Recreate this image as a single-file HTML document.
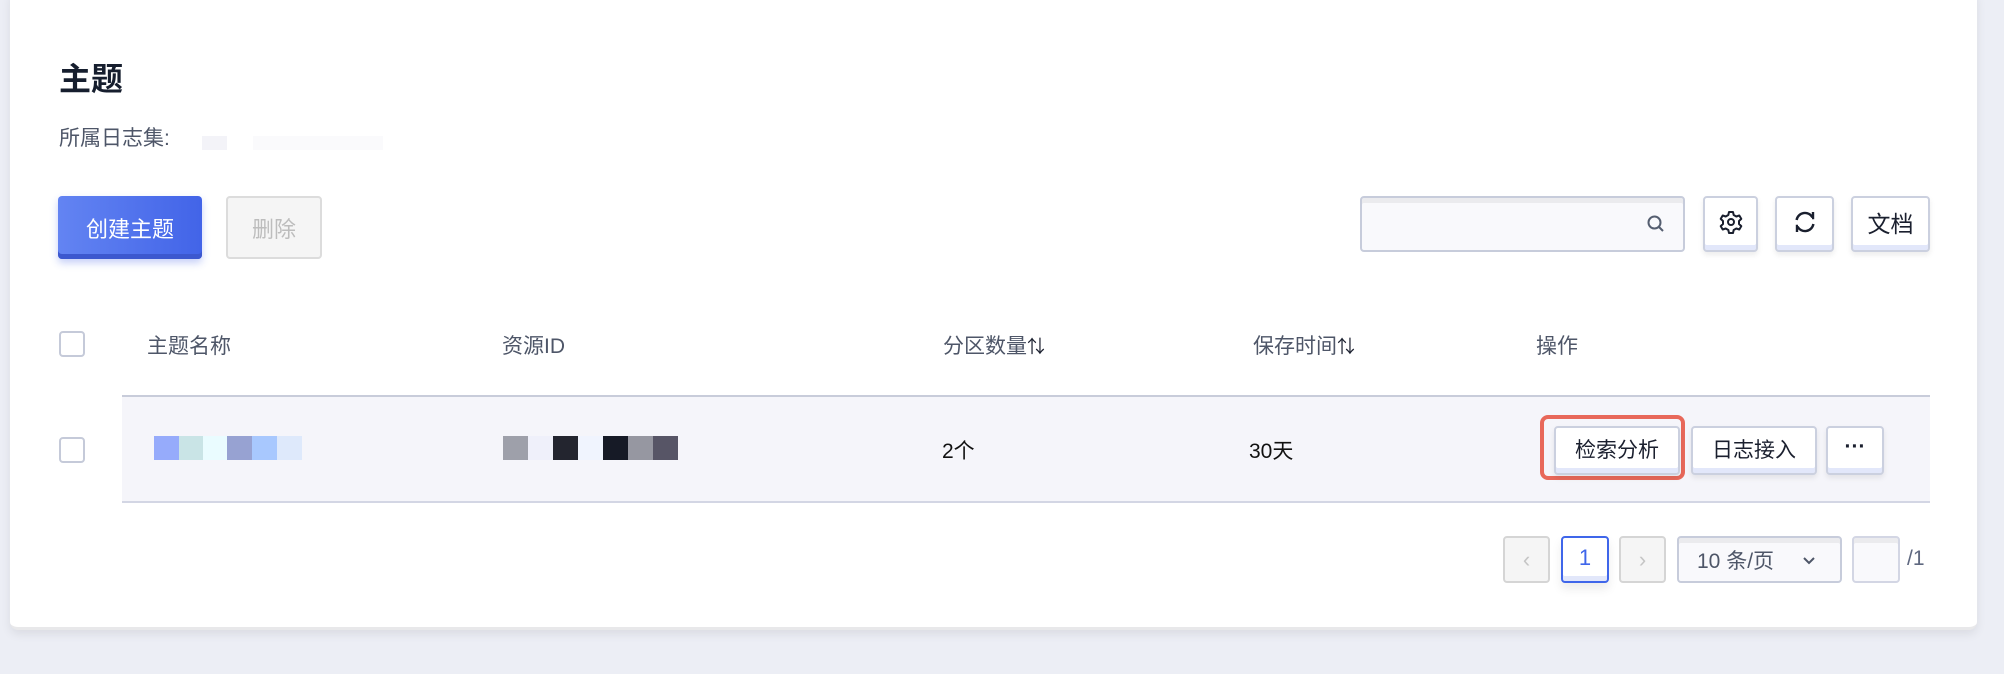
<!DOCTYPE html>
<html><head><meta charset="utf-8"><style>
*{box-sizing:border-box;margin:0;padding:0}
body{width:2004px;height:674px;background:#eceef5;font-family:"Liberation Sans","Noto Sans CJK SC",sans-serif;position:relative;overflow:hidden}
.card{position:absolute;left:10px;top:-10px;width:1967px;height:640px;background:#fff;border-radius:8px;box-shadow:0 4px 10px rgba(0,0,0,.08);border-bottom:3px solid #e8e8ea}
.a{position:absolute}
.btn{position:absolute;background:#fff;border:2px solid #cbd0df;border-radius:4px;box-shadow:inset 0 -5px 0 #e2e7fa,0 3px 6px rgba(0,0,0,.08);display:flex;align-items:center;justify-content:center;color:#1a1f2e;font-size:21px}
.th{position:absolute;top:330px;font-size:21px;color:#4e5668}
.cb{position:absolute;width:26px;height:26px;border:2px solid #c5cad9;border-radius:4px;background:#fff}
.blk{position:absolute;top:436px;height:24px;width:25px}
.pg{position:absolute;top:536px;height:47px;border-radius:4px;display:flex;align-items:center;justify-content:center}
</style></head><body>
<div class="card"></div>
<div class="a" style="left:59px;top:54px;font-size:32px;font-weight:bold;color:#161e2e">主题</div>
<div class="a" style="left:59px;top:122px;font-size:21px;color:#4e5668">所属日志集:</div>
<div class="a" style="left:202px;top:136px;width:25px;height:14px;background:#f3f3f8"></div>
<div class="a" style="left:253px;top:136px;width:130px;height:14px;background:#fafafc"></div>

<div class="a" style="left:58px;top:196px;width:144px;height:63px;border-radius:4px;background:linear-gradient(90deg,#6384f2,#4264e8);box-shadow:inset 0 -5px 0 #3c58cf,0 4px 8px rgba(66,100,232,.3);color:#fff;font-size:22px;display:flex;align-items:center;justify-content:center">创建主题</div>
<div class="a" style="left:226px;top:196px;width:96px;height:63px;border-radius:4px;background:#f5f5f5;border:2px solid #dcdcdc;color:#bdbdbd;font-size:22px;display:flex;align-items:center;justify-content:center">删除</div>

<div class="a" style="left:1360px;top:196px;width:325px;height:56px;border:2px solid #c7ccdb;border-radius:4px;background:#f9f9fc;box-shadow:inset 0 5px 0 #ebebee"></div>
<svg class="a" style="left:1646px;top:214px" width="20" height="20" viewBox="0 0 20 20"><circle cx="8.5" cy="8.5" r="6" fill="none" stroke="#555e70" stroke-width="2"/><path d="M13 13l4 4" stroke="#555e70" stroke-width="2"/></svg>
<div class="btn" style="left:1703px;top:196px;width:55px;height:56px"><svg width="24" height="24" viewBox="0 0 24 24" style="margin-top:-4px"><path d="M10 2h4l.7 3 2.6 1.5 3-1 2 3.4-2.3 2.1v3l2.3 2.1-2 3.4-3-1-2.6 1.5-.7 3h-4l-.7-3-2.6-1.5-3 1-2-3.4 2.3-2.1v-3L1.7 8.9l2-3.4 3 1L9.3 5z" fill="none" stroke="#1a1f2e" stroke-width="2" stroke-linejoin="round"/><circle cx="12" cy="12" r="3" fill="none" stroke="#1a1f2e" stroke-width="2"/></svg></div>
<div class="btn" style="left:1775px;top:196px;width:59px;height:56px"><svg width="26" height="26" viewBox="0 0 26 26" style="margin-top:-4px"><path d="M20.5 8.5A8.5 8.5 0 0 0 4.6 11M5.5 17.5a8.5 8.5 0 0 0 15.9-2.5" fill="none" stroke="#1a1f2e" stroke-width="2.4"/><path d="M21 3v6h-1" fill="none" stroke="#1a1f2e" stroke-width="2.4"/><path d="M5 23v-6h1" fill="none" stroke="#1a1f2e" stroke-width="2.4"/></svg></div>
<div class="btn" style="left:1851px;top:196px;width:79px;height:56px;font-size:23px;padding-bottom:4px">文档</div>

<div class="cb" style="left:59px;top:331px"></div>
<div class="th" style="left:147px">主题名称</div>
<div class="th" style="left:502px">资源ID</div>
<div class="th" style="left:943px">分区数量<span style="font-size:18px;color:#1a1f2e">⇅</span></div>
<div class="th" style="left:1253px">保存时间<span style="font-size:18px;color:#1a1f2e">⇅</span></div>
<div class="th" style="left:1536px">操作</div>
<div class="a" style="left:122px;top:395px;width:1808px;height:108px;background:#f5f5fa;border-top:2px solid #c8ccda;border-bottom:2px solid #d3d6e4"></div>
<div class="cb" style="left:59px;top:437px"></div>
<div class="blk" style="left:154px;background:#96abfb"></div>
<div class="blk" style="left:179px;background:#c9e4e6"></div>
<div class="blk" style="left:203px;background:#eafcff"></div>
<div class="blk" style="left:227px;background:#97a2d2"></div>
<div class="blk" style="left:252px;background:#a8c8fe"></div>
<div class="blk" style="left:277px;background:#dee9fb"></div>
<div class="blk" style="left:503px;background:#9ea0aa"></div>
<div class="blk" style="left:528px;background:#eff0fa"></div>
<div class="blk" style="left:553px;background:#23252f"></div>
<div class="blk" style="left:578px;background:#f0f4fe"></div>
<div class="blk" style="left:603px;background:#161a26"></div>
<div class="blk" style="left:628px;background:#9697a1"></div>
<div class="blk" style="left:653px;background:#575566"></div>
<div class="a" style="left:942px;top:435px;font-size:21px;color:#111">2个</div>
<div class="a" style="left:1249px;top:435px;font-size:21px;color:#111">30天</div>
<div class="a" style="left:1540px;top:415px;width:145px;height:65px;border:4px solid #e8685a;border-radius:8px"></div>
<div class="btn" style="left:1554px;top:426px;width:126px;height:49px;padding-bottom:4px">检索分析</div>
<div class="btn" style="left:1691px;top:426px;width:126px;height:49px;padding-bottom:4px">日志接入</div>
<div class="btn" style="left:1826px;top:426px;width:58px;height:49px;padding-bottom:8px;font-weight:bold">···</div>

<div class="pg" style="left:1503px;width:47px;background:#f5f5f5;border:2px solid #d5d5d5;color:#c5c5c5;font-size:22px">‹</div>
<div class="pg" style="left:1561px;width:48px;background:#fff;border:2px solid #3f66ea;box-shadow:inset 0 -5px 0 #e2e7fa,0 6px 10px rgba(0,0,0,.08);color:#3f66ea;font-size:22px;padding-bottom:4px">1</div>
<div class="pg" style="left:1619px;width:47px;background:#f5f5f5;border:2px solid #d5d5d5;color:#c5c5c5;font-size:22px">›</div>
<div class="pg" style="left:1677px;width:165px;background:#f9f9fc;border:2px solid #c7ccdb;box-shadow:inset 0 5px 0 #ebebee;justify-content:flex-start;padding-left:18px;color:#4e5668;font-size:21px">10 条/页<svg style="position:absolute;right:24px;top:18px" width="14" height="10" viewBox="0 0 14 10"><path d="M2 2l5 5 5-5" fill="none" stroke="#4e5668" stroke-width="2"/></svg></div>
<div class="pg" style="left:1852px;width:48px;background:#f9f9fc;border:2px solid #d3d6e4;box-shadow:inset 0 5px 0 #ebebee"></div>
<div class="a" style="left:1907px;top:547px;font-size:21px;color:#5f6880">/1</div>
</body></html>
